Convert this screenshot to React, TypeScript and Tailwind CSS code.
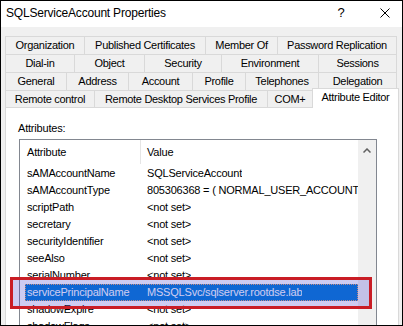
import { FC } from "react";

type Tab = { label: string; w: string };

const tabRows: Tab[][] = [
  [
    { label: "Organization", w: "w-[80px]" },
    { label: "Published Certificates", w: "w-[121px]" },
    { label: "Member Of", w: "w-[72px]" },
    { label: "Password Replication", w: "w-[119px]" },
  ],
  [
    { label: "Dial-in", w: "w-[70px]" },
    { label: "Object", w: "w-[70px]" },
    { label: "Security", w: "w-[77px]" },
    { label: "Environment", w: "w-[97px]" },
    { label: "Sessions", w: "w-[78px]" },
  ],
  [
    { label: "General", w: "w-[62px]" },
    { label: "Address", w: "w-[62px]" },
    { label: "Account", w: "w-[64px]" },
    { label: "Profile", w: "w-[53px]" },
    { label: "Telephones", w: "w-[73px]" },
    { label: "Delegation", w: "w-[78px]" },
  ],
];

const lastRow: Tab[] = [
  { label: "Remote control", w: "w-[90px]" },
  { label: "Remote Desktop Services Profile", w: "w-[173px]" },
  { label: "COM+", w: "w-[45px]" },
];

const attributes = [
  { name: "sAMAccountName", value: "SQLServiceAccount" },
  { name: "sAMAccountType", value: "805306368 = ( NORMAL_USER_ACCOUNT )" },
  { name: "scriptPath", value: "<not set>" },
  { name: "secretary", value: "<not set>" },
  { name: "securityIdentifier", value: "<not set>" },
  { name: "seeAlso", value: "<not set>" },
  { name: "serialNumber", value: "<not set>" },
  { name: "servicePrincipalName", value: "MSSQLSvc/sqlserver.rootdse.lab", selected: true },
  { name: "shadowExpire", value: "<not set>" },
  { name: "shadowFlags", value: "<not set>" },
];

const App: FC = () => {
  return (
    <div className="relative w-[403px] h-[326px] overflow-hidden border border-black bg-[#f0f0f0] font-['Liberation_Sans',Arial,sans-serif] text-black flex flex-col">
      {/* Title bar */}
      <div className="h-[26px] shrink-0 bg-white flex items-start pt-[5px] pl-[5px] pr-[12px]">
        <span className="text-[12px] leading-[14px] tracking-[-0.2px]">
          SQLServiceAccount Properties
        </span>
        <span className="ml-auto w-[20px] text-center text-[13px] leading-[14px]">?</span>
        <svg className="ml-[29px] mt-[2px]" width="10" height="10" viewBox="0 0 10 10">
          <path d="M0.5 0.5 L9.5 9.5 M9.5 0.5 L0.5 9.5" stroke="#000" strokeWidth="1" />
        </svg>
      </div>

      {/* Body */}
      <div className="flex-1 pt-[9px] pl-[4px] text-[11px] tracking-[-0.3px]">
        {/* Tab rows */}
        {tabRows.map((row, i) => (
          <div key={i} className={`flex ${i > 0 ? "-mt-px" : ""}`}>
            {row.map((tab, j) => (
              <div
                key={tab.label}
                className={`${tab.w} h-[19px] flex items-center justify-center border-y border-r border-[#d9d9d9] ${
                  j === 0 ? "border-l" : ""
                }`}
              >
                {tab.label}
              </div>
            ))}
          </div>
        ))}
        <div className="flex items-end -mt-[3px]">
          {lastRow.map((tab, j) => (
            <div
              key={tab.label}
              className={`${tab.w} h-[17px] flex items-center justify-center border-t border-r border-[#d9d9d9] ${
                j === 0 ? "border-l" : ""
              }`}
            >
              {tab.label}
            </div>
          ))}
          <div className="relative z-10 -ml-px -mb-px w-[87px] h-[20px] pb-[2px] flex items-center justify-center bg-white border-x border-t border-[#d9d9d9]">
            Attribute Editor
          </div>
        </div>

        {/* Tab page */}
        <div className="w-[394px] h-[240px] bg-white border border-[#d9d9d9] tracking-[-0.2px]">
          <div className="ml-[12px] mt-[14px] leading-[13px]">Attributes:</div>

          <div className="ml-[13px] mt-[4px] w-[358px] h-[220px] border border-[#828790] flex">
            <div className="w-[338px]">
              {/* Header */}
              <div className="h-[24px] flex items-center">
                <div className="w-[121px] h-full border-r border-[#e5e5e5] pl-[7px] flex items-center">
                  Attribute
                </div>
                <div className="pl-[6px]">Value</div>
              </div>

              {/* Rows */}
              <div className="mt-px ml-[5px] w-[333px]">
                {attributes.map((a) => (
                  <div
                    key={a.name}
                    className={`h-[17px] flex items-center whitespace-nowrap overflow-hidden ${
                      a.selected
                        ? "bg-[#0078d7] text-white outline-1 outline-dotted outline-[#f3a86a] -outline-offset-1"
                        : ""
                    }`}
                  >
                    <div className="w-[122px] shrink-0 pl-[2px]">{a.name}</div>
                    <div className="overflow-hidden">{a.value}</div>
                  </div>
                ))}
              </div>
            </div>

            {/* Scrollbar */}
            <div className="w-[18px] bg-[#f0f0f0] flex justify-center pt-[8px]">
              <svg width="8" height="5" viewBox="0 0 8 5">
                <path d="M0.5 4.5 L4 1 L7.5 4.5" stroke="#606060" strokeWidth="1.5" fill="none" />
              </svg>
            </div>
          </div>
        </div>
      </div>

      {/* Red highlight annotation */}
      <div className="absolute left-[9px] top-[276px] w-[362px] h-[32px] border-[3px] border-[#c91d25] bg-[#3c32c8]/25" />
    </div>
  );
};

export default App;
